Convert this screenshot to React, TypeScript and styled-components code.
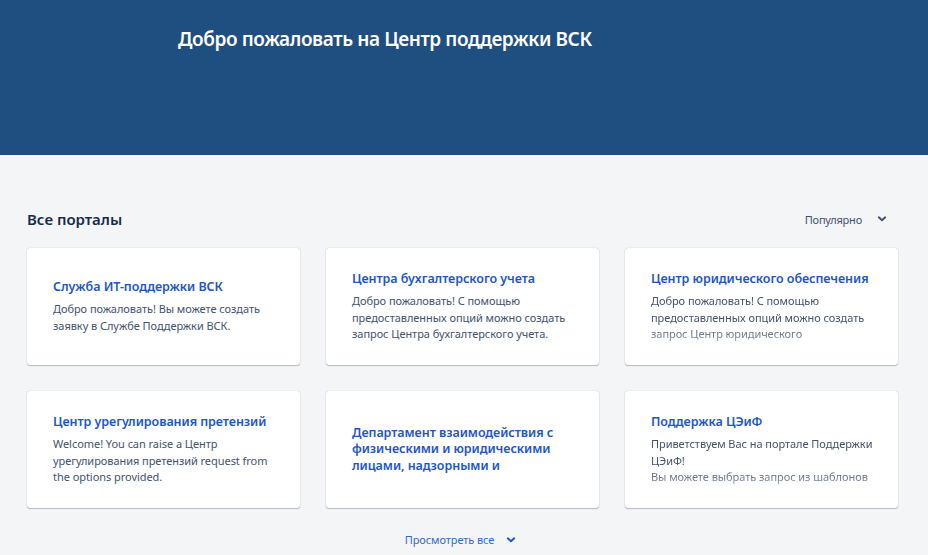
import React from "react";
import styled, { createGlobalStyle } from "styled-components";

const Global = createGlobalStyle`
  html, body { margin: 0; padding: 0; background: #f4f5f7; }
  body { font-family: "Noto Sans", "Open Sans", sans-serif; -webkit-font-smoothing: antialiased; }
  * { box-sizing: border-box; }
`;

const Page = styled.div`
  min-height: 555px;
  background: #f4f5f7;
`;

const Banner = styled.header`
  height: 155px;
  background: #1f4f81;
  padding: 26px 0 0 178px;
`;

const BannerTitle = styled.h1`
  margin: 0;
  font-size: 19px;
  line-height: 26px;
  font-weight: 600;
  letter-spacing: -0.4px;
  color: #ffffff;
`;

const Main = styled.main`
  width: 871px;
  margin: 0 0 0 27px;
  padding-top: 53px;
`;

const SectionHead = styled.div`
  display: flex;
  align-items: center;
  justify-content: space-between;
  height: 22px;
  margin-bottom: 18px;
`;

const SectionTitle = styled.h2`
  margin: 0;
  font-size: 15px;
  line-height: 22px;
  font-weight: 600;
  color: #172b4d;
`;

const SortButton = styled.button`
  display: flex;
  align-items: center;
  gap: 15px;
  border: none;
  background: none;
  padding: 0 11px 0 0;
  font-family: inherit;
  font-size: 11px;
  letter-spacing: -0.2px;
  color: #42526e;
  cursor: pointer;
`;

const Grid = styled.div`
  display: grid;
  grid-template-columns: repeat(3, 1fr);
  grid-auto-rows: 117px;
  gap: 26px;
`;

const Card = styled.a`
  display: flex;
  flex-direction: column;
  justify-content: center;
  padding: 0 18px 0 26px;
  background: #ffffff;
  border-radius: 3px;
  box-shadow: 0 1px 1px rgba(9, 30, 66, 0.25), 0 0 1px rgba(9, 30, 66, 0.31);
  text-decoration: none;
  overflow: hidden;
`;

const CardTitle = styled.div`
  font-size: 12.5px;
  line-height: 16.5px;
  font-weight: 600;
  letter-spacing: -0.05px;
  color: #1d55c8;
  padding-right: 6px;
`;

const CardText = styled.div<{ $fade?: boolean }>`
  margin-top: 6px;
  font-size: 11px;
  letter-spacing: -0.05px;
  line-height: 16.5px;
  color: #42526e;
  white-space: pre-line;
  ${(p) =>
    p.$fade
      ? "-webkit-mask-image: linear-gradient(to bottom, #000 64%, rgba(0,0,0,0.55) 100%); mask-image: linear-gradient(to bottom, #000 64%, rgba(0,0,0,0.55) 100%);"
      : ""}
`;

const Footer = styled.div`
  display: flex;
  justify-content: center;
  padding-top: 24px;
  padding-right: 4px;
`;

const MoreButton = styled.button`
  display: flex;
  align-items: center;
  gap: 12px;
  border: none;
  background: none;
  padding: 0;
  font-family: inherit;
  font-size: 11px;
  letter-spacing: -0.1px;
  color: #3568d4;
  cursor: pointer;
`;

const Chevron = ({ color }: { color: string }) => (
  <svg width="10" height="10" viewBox="0 0 10 10" aria-hidden>
    <path
      d="M1.8 3.3 L5 6.3 L8.2 3.3"
      fill="none"
      stroke={color}
      strokeWidth="1.9"
      strokeLinecap="round"
      strokeLinejoin="round"
    />
  </svg>
);

const portals: { title: string; text?: string; fade?: boolean }[] = [
  {
    title: "Служба ИТ-поддержки ВСК",
    text: "Добро пожаловать! Вы можете создать\nзаявку в Службе Поддержки ВСК.",
  },
  {
    title: "Центра бухгалтерского учета",
    text: "Добро пожаловать! С помощью\nпредоставленных опций можно создать\nзапрос Центра бухгалтерского учета.",
  },
  {
    title: "Центр юридического обеспечения",
    text: "Добро пожаловать! С помощью\nпредоставленных опций можно создать\nзапрос Центр юридического",
    fade: true,
  },
  {
    title: "Центр урегулирования претензий",
    text: "Welcome! You can raise a Центр\nурегулирования претензий request from\nthe options provided.",
  },
  {
    title: "Департамент взаимодействия с физическими и юридическими лицами, надзорными и",
  },
  {
    title: "Поддержка ЦЭиФ",
    text: "Приветствуем Вас на портале Поддержки\nЦЭиФ!\nВы можете выбрать запрос из шаблонов",
    fade: true,
  },
];

export default function App() {
  return (
    <Page>
      <Global />
      <Banner>
        <BannerTitle>Добро пожаловать на Центр поддержки ВСК</BannerTitle>
      </Banner>
      <Main>
        <SectionHead>
          <SectionTitle>Все порталы</SectionTitle>
          <SortButton>
            Популярно
            <Chevron color="#42526e" />
          </SortButton>
        </SectionHead>
        <Grid>
          {portals.map((p) => (
            <Card key={p.title} href="#">
              <CardTitle>{p.title}</CardTitle>
              {p.text && <CardText $fade={p.fade}>{p.text}</CardText>}
            </Card>
          ))}
        </Grid>
        <Footer>
          <MoreButton>
            Просмотреть все
            <Chevron color="#1d55c8" />
          </MoreButton>
        </Footer>
      </Main>
    </Page>
  );
}
